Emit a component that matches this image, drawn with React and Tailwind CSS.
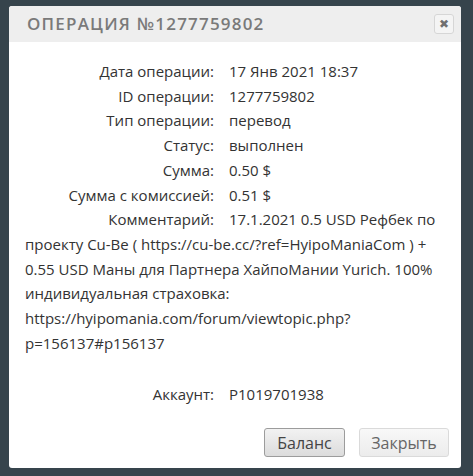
const rows = [
  ["Дата операции:", "17 Янв 2021 18:37"],
  ["ID операции:", "1277759802"],
  ["Тип операции:", "перевод"],
  ["Статус:", "выполнен"],
  ["Сумма:", "0.50 $"],
  ["Сумма с комиссией:", "0.51 $"],
  [
    "Комментарий:",
    "17.1.2021 0.5 USD Рефбек по проекту Cu-Be ( https://cu-be.cc/?ref=HyipoManiaCom ) + 0.55 USD Маны для Партнера ХайпоМании Yurich. 100% индивидуальная страховка: https://hyipomania.com/forum/viewtopic.php?p=156137#p156137",
  ],
];

export default function App() {
  return (
    <div className="w-[473px] h-[476px] bg-[#36444c] pt-[6px] pl-[9px]">
      <div className="w-[452px] h-[462px] bg-white rounded-[3px] flex flex-col overflow-hidden">
        {/* header */}
        <div className="h-[36px] bg-[#eeeeee] flex items-center justify-between pl-[18px] pr-[7px] shrink-0">
          <h1 className="font-['Open_Sans',sans-serif] font-semibold text-[17px] tracking-[1.2px] text-[#7a7a7a] uppercase">
            Операция №1277759802
          </h1>
          <button className="w-[20px] h-[20px] rounded-[3px] border border-[#d6d6d6] bg-[#f4f4f4] flex items-center justify-center text-[#6f6f6f] text-[12px] leading-none font-['DejaVu_Sans',sans-serif]">
            ✖
          </button>
        </div>

        {/* body */}
        <div className="flex-1 px-[16px] pt-[17px] font-['Open_Sans',sans-serif] text-[15px] leading-[24.7px] text-[#333]">
          {rows.map(([label, value]) => (
            <p key={label}>
              <span className="inline-block w-[189px] text-right mr-[15px]">{label}</span>
              {value}
            </p>
          ))}
          <p className="mt-[27px]">
            <span className="inline-block w-[189px] text-right mr-[15px]">Аккаунт:</span>
            P1019701938
          </p>
        </div>

        {/* footer */}
        <div className="flex justify-end gap-[14px] pr-[12px] pb-[11px] font-['Open_Sans',sans-serif] text-[16px]">
          <button className="w-[81px] h-[29px] rounded-[3px] border border-[#9c9c9c] bg-gradient-to-b from-[#f2f2f2] to-[#dcdcdc] text-[#444]">
            Баланс
          </button>
          <button className="w-[90px] h-[29px] rounded-[3px] border border-[#dadada] bg-gradient-to-b from-[#f8f8f8] to-[#ececec] text-[#666]">
            Закрыть
          </button>
        </div>
      </div>
    </div>
  );
}
